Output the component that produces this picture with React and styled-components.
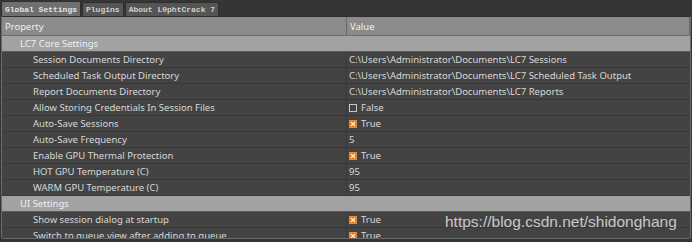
import React from "react";
import styled, {createGlobalStyle} from "styled-components";

const GlobalStyle = createGlobalStyle`
  html, body {
    margin: 0;
    padding: 0;
    background: #353535;
  }
`

const Window = styled.div`
  position: relative;
  width: 692px;
  height: 242px;
  background: #353535;
  overflow: hidden;
  font-family: "Noto Sans", "Open Sans", sans-serif;
`

const TabBar = styled.div`
  display: flex;
  align-items: flex-end;
  height: 16px;
  padding-left: 1px;
  gap: 1px;
`

const Tab = styled.div`
  height: ${p => p.active ? 15 : 14}px;
  padding: 0 3px;
  display: flex;
  align-items: center;
  font-family: "Liberation Mono", "DejaVu Sans Mono", monospace;
  font-size: 8px;
  font-weight: bold;
  background: ${p => p.active ? "#6f6f6f" : "#555555"};
  color: ${p => p.active ? "#e6e6e6" : "#d0d0d0"};
  border: 1px solid #2e2e2e;
  border-bottom: none;
  border-radius: 2px 2px 0 0;
  box-sizing: border-box;
`

const Panel = styled.div`
  height: 223px;
  margin: 0 1px;
  border: 1px solid #6a6a6a;
  border-top: 1px solid #2e2e2e;
  border-radius: 0 0 3px 3px;
  overflow: hidden;
  box-sizing: border-box;
  background: #424242;
`

const Grid = styled.div`
  display: grid;
  grid-template-columns: 345px 1fr;
`

const HeaderCell = styled.div`
  height: 19px;
  display: flex;
  align-items: center;
  padding-left: 3px;
  background: #8b8b8b;
  color: #f2f2f2;
  font-size: 9.5px;
  border-right: 1px solid #6a6a6a;
  border-bottom: 1px solid #6e6e6e;
  box-sizing: border-box;
  &:last-child {
    margin-right: 3px;
    border-right: 1px solid #5a5a5a;
  }
`

const Section = styled.div`
  grid-column: 1 / 3;
  height: 16px;
  display: flex;
  align-items: center;
  padding-left: 18px;
  background: #a2a2a2;
  color: #f0f0f0;
  font-size: 9.5px;
  border-bottom: 1px solid #5a5a5a;
  box-sizing: border-box;
`

const Cell = styled.div`
  height: 16px;
  display: flex;
  align-items: center;
  gap: 4px;
  padding-left: ${p => p.label ? 31 : 2}px;
  color: #d8d8d8;
  font-size: 9.5px;
  white-space: nowrap;
  background: #434343;
  border-bottom: 1px solid #383838;
  border-right: ${p => p.label ? "1px solid #393939" : "none"};
  box-sizing: border-box;
`

const Box = styled.span`
  width: 8px;
  height: 8px;
  box-sizing: border-box;
  border: 1px solid ${p => p.checked ? "#f08a2c" : "#c8c8c8"};
  background: ${p => p.checked ? "#e2741d" : "transparent"};
  display: inline-flex;
  align-items: center;
  justify-content: center;
`

const Watermark = styled.div`
  position: absolute;
  left: 445px;
  top: 213px;
  font-family: "Liberation Sans", Arial, sans-serif;
  font-size: 15.5px;
  color: rgba(225, 225, 225, 0.85);
`

const Check = ({checked}) => (
    <Box checked={checked}>
        {checked && <svg width="6" height="6" viewBox="0 0 6 6">
            <path d="M1 1L5 5M5 1L1 5" stroke="#fff2e0" strokeWidth="1.2"/>
        </svg>}
    </Box>
)

const sections = [
    {
        title: "LC7 Core Settings",
        rows: [
            ["Session Documents Directory", "C:\\Users\\Administrator\\Documents\\LC7 Sessions"],
            ["Scheduled Task Output Directory", "C:\\Users\\Administrator\\Documents\\LC7 Scheduled Task Output"],
            ["Report Documents Directory", "C:\\Users\\Administrator\\Documents\\LC7 Reports"],
            ["Allow Storing Credentials In Session Files", false],
            ["Auto-Save Sessions", true],
            ["Auto-Save Frequency", "5"],
            ["Enable GPU Thermal Protection", true],
            ["HOT GPU Temperature (C)", "95"],
            ["WARM GPU Temperature (C)", "95"],
        ]
    },
    {
        title: "UI Settings",
        rows: [
            ["Show session dialog at startup", true],
            ["Switch to queue view after adding to queue", true],
        ]
    }
]

const App = () => {
    return <Window>
        <GlobalStyle/>
        <TabBar>
            <Tab active>Global Settings</Tab>
            <Tab>Plugins</Tab>
            <Tab>About L0phtCrack 7</Tab>
        </TabBar>
        <Panel>
            <Grid>
                <HeaderCell>Property</HeaderCell>
                <HeaderCell>Value</HeaderCell>
                {sections.map(section => <React.Fragment key={section.title}>
                    <Section>{section.title}</Section>
                    {section.rows.map(([name, value]) => <React.Fragment key={name}>
                        <Cell label>{name}</Cell>
                        <Cell>
                            {typeof value === "boolean"
                                ? <><Check checked={value}/>{value ? "True" : "False"}</>
                                : value}
                        </Cell>
                    </React.Fragment>)}
                </React.Fragment>)}
            </Grid>
        </Panel>
        <Watermark>https://blog.csdn.net/shidonghang</Watermark>
    </Window>
}

export default App;
